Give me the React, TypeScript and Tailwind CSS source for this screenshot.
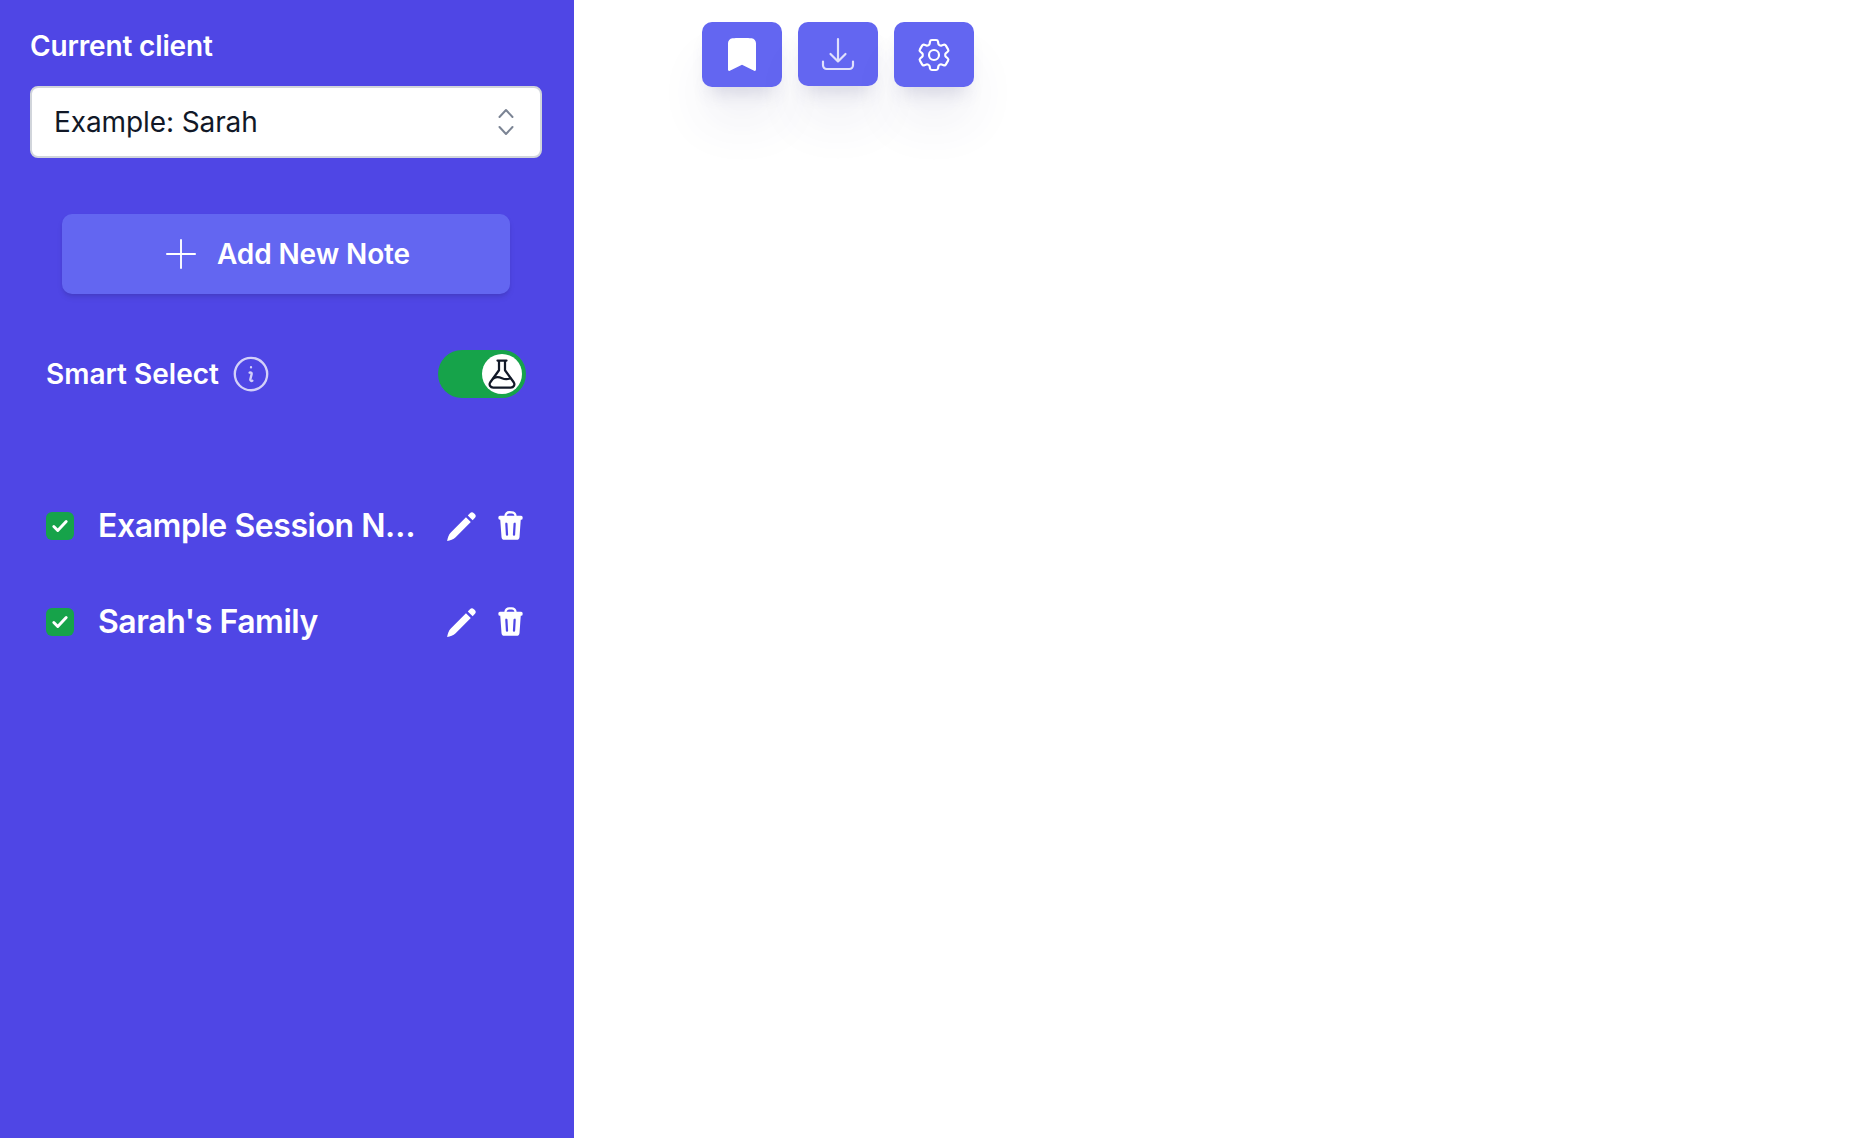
import React from "react";

const notes = ["Example Session Notes", "Sarah's Family"];

const buttonShadow =
  "shadow-[0_38px_50px_-4px_rgba(70,70,130,0.08),0_14px_18px_-8px_rgba(70,70,130,0.18)]";

function PencilIcon() {
  return (
    <svg viewBox="0 0 24 24" fill="currentColor" className="w-[34px] h-[34px]">
      <path d="M1.500 22.500c.4-2.200 1-4.400 2.600-6L14.800 5.800l3.400 3.400L7.500 19.900c-1.600 1.600-3.800 2.200-6 2.600Z" />
      <path d="m16.100 4.500 1.500-1.500a2 2 0 0 1 2.800 0l.6.6a2 2 0 0 1 0 2.800l-1.500 1.500Z" />
    </svg>
  );
}

function TrashIcon() {
  return (
    <svg viewBox="0 0 20 24" className="w-[25px] h-[30px]" fill="currentColor">
      <path d="M6 4.500V4a3 3 0 0 1 3-3h2a3 3 0 0 1 3 3v.5" fill="none" stroke="currentColor" strokeWidth="1.800" />
      <path
        fillRule="evenodd"
        d="M1.500 3.800h17a1.200 1.200 0 0 1 1.200 1.200v.8a1.200 1.200 0 0 1-1.200 1.200h-.3l-1 13.700a2.500 2.500 0 0 1-2.500 2.300H5.300a2.500 2.500 0 0 1-2.500-2.300L1.800 7h-.3A1.200 1.200 0 0 1 .3 5.800V5a1.200 1.200 0 0 1 1.200-1.200ZM6.700 9.300a.9.9 0 0 0-.9 1l.5 8.700a.9.9 0 0 0 1.800-.1l-.5-8.700a.9.9 0 0 0-.9-.9Zm6.600 0a.9.9 0 0 0-.9.9l-.5 8.700a.9.9 0 0 0 1.800.1l.5-8.700a.9.9 0 0 0-.9-1Z"
      />
    </svg>
  );
}

function Checkbox() {
  return (
    <div className="w-[28px] h-[28px] rounded-[6px] bg-[#16a34a] flex items-center justify-center shrink-0">
      <svg viewBox="0 0 16 16" className="w-[18px] h-[18px]" fill="none" stroke="white" strokeWidth="2.600" strokeLinecap="round" strokeLinejoin="round">
        <path d="m2.500 8.500 3.500 3.500 7.500-8" />
      </svg>
    </div>
  );
}

export default function App() {
  return (
    <div className="flex h-[1138px] bg-white font-['Inter',sans-serif] overflow-hidden">
      <aside className="w-[574px] shrink-0 bg-[#4f46e5] pt-[30px] pl-[30px] pr-[32px] flex flex-col">
        <label className="h-[32px] flex items-center text-[28px] leading-none font-semibold tracking-[-0.15px] text-white">
          Current client
        </label>

        <div className="mt-[24px] h-[72px] rounded-[8px] bg-white border-2 border-[#d1d5db] pl-[22px] pr-[26px] flex items-center justify-between">
          <span className="text-[28px] tracking-[-0.1px] text-[#111827]">Example: Sarah</span>
          <svg viewBox="0 0 16 30" className="w-[16px] h-[30px] text-[#7b8494]" fill="none" stroke="currentColor" strokeWidth="2" strokeLinecap="round" strokeLinejoin="round">
            <path d="m1.500 10 6.500-7 6.500 7" />
            <path d="m1.500 20 6.500 7 6.500-7" />
          </svg>
        </div>

        <button className="mt-[56px] mx-[32px] h-[80px] pl-[4px] rounded-[10px] bg-[#6366f1] text-white flex items-center justify-center gap-[21px] shadow-[0_4px_6px_-1px_rgba(0,0,0,0.1),0_2px_4px_-2px_rgba(0,0,0,0.1)]">
          <svg viewBox="4 4 16 16" className="w-[30px] h-[30px]" fill="none" stroke="currentColor" strokeWidth="1" strokeLinecap="round">
            <path d="M12 4.500v15m7.500-7.500h-15" />
          </svg>
          <span className="text-[28px] font-semibold tracking-[-0.1px]">Add New Note</span>
        </button>

        <div className="mt-[56px] h-[48px] px-[16px] flex items-center justify-between">
          <div className="flex items-center gap-[14px]">
            <span className="text-[28px] font-semibold text-white">Smart Select</span>
            <svg viewBox="2 2 20 20" className="w-[36px] h-[36px] text-white/75" fill="none" stroke="currentColor" strokeWidth="1.300" strokeLinecap="round" strokeLinejoin="round">
              <path d="m11.250 11.250.041-.02a.75.75 0 0 1 1.063.852l-.708 2.836a.75.75 0 0 0 1.063.853l.041-.021M21 12a9 9 0 1 1-18 0 9 9 0 0 1 18 0Zm-9-3.750h.008v.008H12V8.250Z" />
            </svg>
          </div>
          <div className="w-[88px] h-[48px] rounded-full bg-[#16a34a] p-[4px] flex justify-end">
            <div className="w-[40px] h-[40px] rounded-full bg-white flex items-center justify-center">
              <svg viewBox="0 0 24 24" className="w-[36px] h-[36px] text-[#111827]" fill="none" stroke="currentColor" strokeWidth="1.500" strokeLinecap="round" strokeLinejoin="round">
                <path d="M9 3h6M10 3v6.500L4.200 17.500c-1.100 1.700 0 3.500 2 3.500h11.600c2 0 3.100-1.800 2-3.500L14 9.500V3" />
                <path d="M6.500 14.800c2-1.200 3.700-.8 5.500 0s3.500 1 5.500 0" />
              </svg>
            </div>
          </div>
        </div>

        <ul className="mt-[104px] px-[16px] flex flex-col gap-[48px]">
          {notes.map((note) => (
            <li key={note} className="h-[48px] flex items-center text-white">
              <Checkbox />
              <span className="ml-[24px] w-[321px] truncate text-[32px] font-semibold tracking-[-0.45px]">{note}</span>
              <span className="ml-[26px]">
                <PencilIcon />
              </span>
              <span className="ml-[19px]">
                <TrashIcon />
              </span>
            </li>
          ))}
        </ul>
      </aside>

      <main className="flex-1 pl-[128px] pt-[22px]">
        <div className="flex gap-[16px]">
          <button className={`w-[80px] h-[65px] rounded-[10px] bg-[#6366f1] text-white flex items-center justify-center ${buttonShadow}`}>
            <svg viewBox="3.750 2.400 16.500 19.400" className="w-[28px] h-[33px]" fill="currentColor">
              <path d="M6.320 2.577a49.255 49.255 0 0 1 11.360 0c1.497.174 2.570 1.460 2.570 2.930V21a.75.75 0 0 1-1.085.67L12 18.089l-7.165 3.583A.75.75 0 0 1 3.750 21V5.507c0-1.470 1.073-2.756 2.570-2.930Z" />
            </svg>
          </button>
          <button className={`w-[80px] h-[64px] rounded-[10px] bg-[#6366f1] text-white flex items-center justify-center ${buttonShadow}`}>
            <svg viewBox="0 0 24 24" className="w-[40px] h-[40px] text-white/80" fill="none" stroke="currentColor" strokeWidth="1.300" strokeLinecap="round" strokeLinejoin="round">
              <path d="M3 16.500v2.250A2.250 2.250 0 0 0 5.250 21h13.500A2.250 2.250 0 0 0 21 18.750V16.500M16.500 12 12 16.500m0 0L7.500 12m4.500 4.500V3" />
            </svg>
          </button>
          <button className={`w-[80px] h-[65px] rounded-[10px] bg-[#6366f1] text-white flex items-center justify-center ${buttonShadow}`}>
            <svg viewBox="0 0 24 24" className="w-[40px] h-[40px]" fill="none" stroke="currentColor" strokeWidth="1.300" strokeLinecap="round" strokeLinejoin="round">
              <path d="M9.594 3.940c.09-.542.56-.94 1.110-.94h2.593c.55 0 1.020.398 1.110.94l.213 1.281c.063.374.313.686.645.87.074.04.147.083.22.127.325.196.72.257 1.075.124l1.217-.456a1.125 1.125 0 0 1 1.370.49l1.296 2.247a1.125 1.125 0 0 1-.26 1.431l-1.003.827c-.293.241-.438.613-.43.992a7.723 7.723 0 0 1 0 .255c-.008.378.137.75.43.991l1.004.827c.424.35.534.955.26 1.430l-1.298 2.247a1.125 1.125 0 0 1-1.369.491l-1.217-.456c-.355-.133-.75-.072-1.076.124a6.470 6.470 0 0 1-.22.128c-.331.183-.581.495-.644.869l-.213 1.281c-.09.543-.56.94-1.110.94h-2.594c-.55 0-1.019-.398-1.110-.94l-.213-1.281c-.062-.374-.312-.686-.644-.87a6.520 6.520 0 0 1-.22-.127c-.325-.196-.72-.257-1.076-.124l-1.217.456a1.125 1.125 0 0 1-1.369-.49l-1.297-2.247a1.125 1.125 0 0 1 .26-1.431l1.004-.827c.292-.24.437-.613.43-.991a6.932 6.932 0 0 1 0-.255c.007-.38-.138-.751-.43-.992l-1.004-.827a1.125 1.125 0 0 1-.26-1.430l1.297-2.247a1.125 1.125 0 0 1 1.370-.491l1.216.456c.356.133.751.072 1.076-.124.072-.044.146-.086.22-.128.332-.183.582-.495.644-.869l.214-1.280Z" />
              <path d="M15 12a3 3 0 1 1-6 0 3 3 0 0 1 6 0Z" />
            </svg>
          </button>
        </div>
      </main>
    </div>
  );
}
